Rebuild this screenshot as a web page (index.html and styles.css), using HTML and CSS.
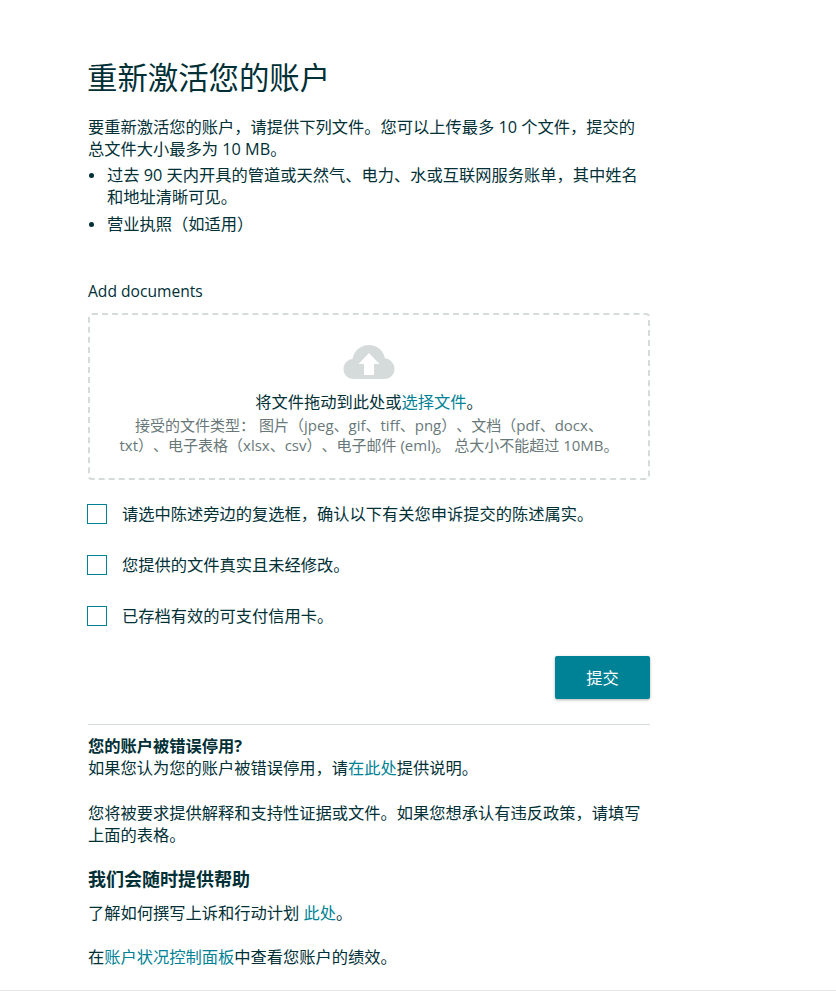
FILE: index.html
```html
<!DOCTYPE html>
<html>
<head>
<meta charset="utf-8" />
<title>重新激活您的账户</title>
<link rel="stylesheet" href="styles.css">
</head>
<body>
	<div class="wrap">
		<h1 class="title">重新激活您的账户</h1>
		<p class="intro">要重新激活您的账户，请提供下列文件。您可以上传最多 10 个文件，提交的总文件大小最多为 10 MB。</p>
		<ul class="docs">
			<li>过去 90 天内开具的管道或天然气、电力、水或互联网服务账单，其中姓名和地址清晰可见。</li>
			<li>营业执照（如适用）</li>
		</ul>

		<p class="addLabel">Add documents</p>
		<div class="drop">
			<svg class="cloud" width="52" height="34" viewBox="0 0 52 34">
				<path fill="#d5dbdb" d="M11 34C4.500 34 0.500 29.500 0.500 24C0.500 18.500 4.500 14.500 9.500 14C11 5.500 18 0 26 0C34 0 40.500 5.500 42 13.500C47.500 14 51.500 18.500 51.500 24C51.500 29.500 47.500 34 41 34Z"/>
				<path fill="#fff" d="M26 8L36.500 19H31V30H21V19H15.500Z"/>
			</svg>
			<p class="dropMain">将文件拖动到此处或<a href="#">选择文件</a>。</p>
			<p class="dropNote">接受的文件类型： 图片（jpeg、gif、tiff、png）、文档（pdf、docx、txt）、电子表格（xlsx、csv）、电子邮件 (eml)。 总大小不能超过 10MB。</p>
		</div>

		<label class="check"><span class="box"></span>请选中陈述旁边的复选框，确认以下有关您申诉提交的陈述属实。</label>
		<label class="check"><span class="box"></span>您提供的文件真实且未经修改。</label>
		<label class="check"><span class="box"></span>已存档有效的可支付信用卡。</label>

		<div class="actions">
			<button class="btn" type="button">提交</button>
		</div>

		<div class="help">
			<p><b>您的账户被错误停用?</b></p>
			<p>如果您认为您的账户被错误停用，请<a href="#">在此处</a>提供说明。</p>
			<p class="gap">您将被要求提供解释和支持性证据或文件。如果您想承认有违反政策，请填写上面的表格。</p>
			<h2>我们会随时提供帮助</h2>
			<p>了解如何撰写上诉和行动计划 <a href="#">此处</a>。</p>
			<p class="gap">在<a href="#">账户状况控制面板</a>中查看您账户的绩效。</p>
		</div>
	</div>
	<div class="foot"></div>
</body>
</html>
```

FILE: styles.css
```css
body, h1, h2, p, ul {margin:0; padding:0;}
li {list-style:none;}
a {text-decoration:none; color:#008296;}

html, body {height:100%;}
body {background:#fff; color:#002f36; font:400 16.25px/22px "Open Sans", "Noto Sans CJK SC", sans-serif; text-spacing-trim:space-all; display:flex; flex-direction:column; overflow:hidden;}

.wrap {width:562px; margin-left:88px; flex:1;}
.title {font-size:30.4px; line-height:40px; font-weight:400; margin:58px 0 0 -1px;}
.intro {margin-top:18px;}

.docs {margin-top:4px;}
.docs li {position:relative; padding-left:19px; margin-bottom:5px;}
.docs li:before {content:""; position:absolute; left:1px; top:9px; width:5px; height:5px; border-radius:50%; background:#002f36;}

.addLabel {margin-top:45px; font-size:15.6px;}
.drop {margin-top:11px; height:163px; border:2px dashed #d5dbdb; border-radius:4px; text-align:center; display:flex; flex-direction:column; align-items:center;}
.cloud {margin-top:30px;}
.dropMain {margin-top:12px;}
.dropNote {width:500px; margin-top:2px; font-size:15px; line-height:20px; color:#687879;}

.check {display:flex; align-items:center; margin-top:31px; height:20px;}
.drop + .check {margin-top:24px;}
.box {width:18px; height:18px; border:1px solid #008296; margin-left:-1px; margin-right:15px;}

.actions {display:flex; justify-content:flex-end; margin-top:30px;}
.btn {width:95px; height:43px; border:0; border-radius:2px; background:#008296; color:#fff; font:inherit; box-shadow:0 1px 3px rgba(0,0,0,.3);}

.help {margin-top:25px; padding-top:10px; border-top:1px solid #d5dbdb;}
.help b {font-weight:700;}
.help .gap {margin-top:23px;}
.help h2 {font-size:18px; line-height:24px; font-weight:700; margin-top:21px; margin-bottom:11px;}
.help h2 + p + .gap {margin-top:22px;}

.foot {height:1px; background:#e5e5e5;}
```
